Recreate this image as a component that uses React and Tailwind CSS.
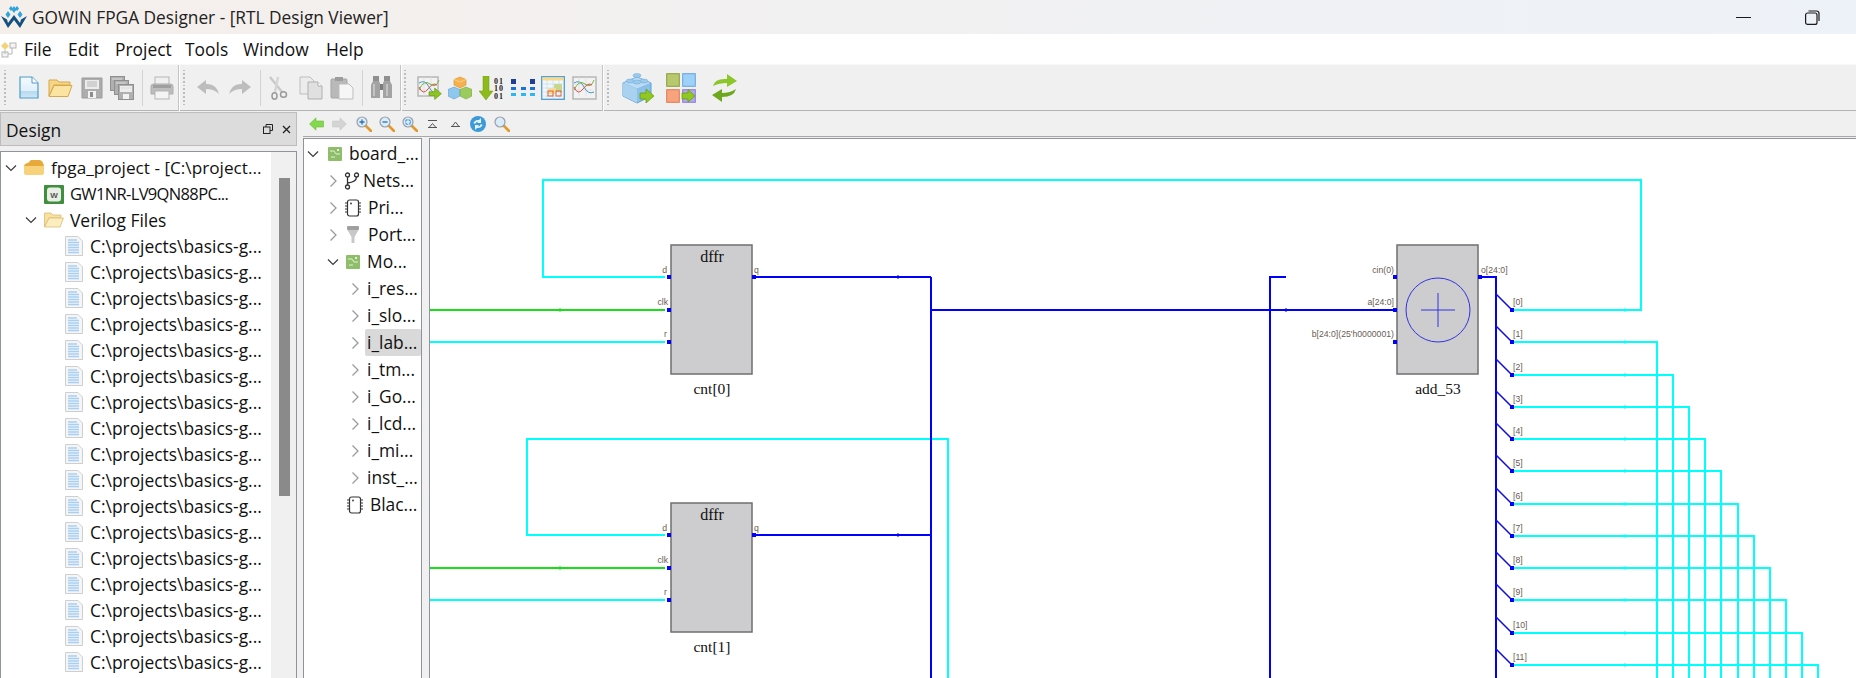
import React from 'react';

const Doc = () => (
  <svg width="20" height="23" viewBox="0 0 20 23">
    <defs><linearGradient id="dg" x1="0" y1="0" x2="0" y2="1"><stop offset="0" stopColor="#f4fafe" /><stop offset="0.65" stopColor="#e0f0fa" /><stop offset="0.66" stopColor="#b5d9ee" /><stop offset="1" stopColor="#cfe7f5" /></linearGradient></defs>
    <path d="M1 1H13L19 7V22H1Z" fill="url(#dg)" stroke="#4f9cc9" strokeWidth="1.2" />
    <path d="M13 1V7H19" fill="#fff" stroke="#4f9cc9" />
  </svg>
);
const Folder = () => (
  <svg width="25" height="20" viewBox="0 0 25 20">
    <path d="M1 18V2H9L11 4H22V7H6L1 18Z" fill="#f6d685" stroke="#d5a84c" />
    <path d="M1 18.5L6 7.5H24L20 18.5Z" fill="#fbe4a2" stroke="#d5a84c" />
  </svg>
);
const Floppy = ({ w = 22 }) => (
  <svg width={w} height={w} viewBox="0 0 22 22">
    <path d="M1 1H21V21H1Z" fill="#adadad" stroke="#9a9a9a" />
    <rect x="4" y="3" width="14" height="9" fill="#ececec" />
    <path d="M6 5H16M6 7H16M6 9H16" stroke="#b5b5b5" />
    <rect x="7" y="14" width="8" height="7" fill="#f2f2f2" />
    <rect x="9" y="15" width="3" height="5" fill="#8c8c8c" />
  </svg>
);
const SaveAll = () => (
  <svg width="24" height="24" viewBox="0 0 24 24">
    <g fill="#b0b0b0" stroke="#8f8f8f"><rect x="0.5" y="0.5" width="14" height="14" /><rect x="4.5" y="4.5" width="14" height="14" /><rect x="8.5" y="8.5" width="15" height="15" /></g>
    <rect x="10" y="10" width="12" height="6" fill="#ececec" />
    <rect x="13" y="18" width="6" height="5" fill="#f2f2f2" />
    <path d="M2 3H12M6 7H16M11 12H21" stroke="#dcdcdc" />
  </svg>
);
const Printer = () => (
  <svg width="24" height="24" viewBox="0 0 24 24">
    <rect x="5" y="1" width="14" height="8" fill="#f0f0f0" stroke="#b5b5b5" />
    <path d="M1 10Q1 8 4 8H20Q23 8 23 10V18H1Z" fill="#bdbdbd" stroke="#adadad" />
    <rect x="3" y="9" width="18" height="3" fill="#9f9f9f" />
    <rect x="5" y="15" width="14" height="8" fill="#f4f4f4" stroke="#b5b5b5" />
  </svg>
);
const Undo = ({ flip }) => (
  <svg width="24" height="15" viewBox="0 0 24 15" style={flip ? { transform: 'scaleX(-1)' } : undefined}>
    <path d="M1 7L10 0V4Q20 3 23 14Q18 9 10 9V14Z" fill="#bdbdbd" />
  </svg>
);
const Scissors = () => (
  <svg width="19" height="24" viewBox="0 0 19 24" fill="none">
    <path d="M1 1L13 16" stroke="#c9c9c9" strokeWidth="2.4" />
    <path d="M9 1L6 16" stroke="#d4d4d4" strokeWidth="2.4" />
    <ellipse cx="5.5" cy="20" rx="2.5" ry="3.2" stroke="#9a9a9a" strokeWidth="1.5" />
    <ellipse cx="14.5" cy="18.5" rx="3" ry="2.8" stroke="#9a9a9a" strokeWidth="1.5" />
  </svg>
);
const Copy = () => (
  <svg width="24" height="24" viewBox="0 0 24 24">
    <path d="M1 1H11L15 5V18H1Z" fill="#ececec" stroke="#bdbdbd" />
    <path d="M9 6H19L23 10V23H9Z" fill="#e0e0e0" stroke="#b0b0b0" />
    <path d="M19 6V10H23" fill="#fff" stroke="#b0b0b0" />
  </svg>
);
const Paste = () => (
  <svg width="24" height="24" viewBox="0 0 24 24">
    <rect x="1" y="3" width="16" height="19" rx="1" fill="#b9b9b9" stroke="#a5a5a5" />
    <rect x="5" y="1" width="8" height="4" fill="#9d9d9d" />
    <path d="M9 8H19L23 12V23H9Z" fill="#f6f6f6" stroke="#bdbdbd" />
  </svg>
);
const Binoculars = () => (
  <svg width="21" height="23" viewBox="0 0 21 23">
    <rect x="2" y="0" width="6" height="5" fill="#8f8f8f" /><rect x="13" y="0" width="6" height="5" fill="#8f8f8f" />
    <path d="M1 7L2 5H8L9 7V22H0V9Z" fill="#a3a3a3" /><path d="M12 7L13 5H19L21 9V22H12Z" fill="#a3a3a3" />
    <rect x="9" y="8" width="3" height="6" fill="#7c7c7c" />
    <path d="M3 8V20M16 8V20" stroke="#cfcfcf" strokeWidth="1.5" />
  </svg>
);
const GreenArrow = ({ x, y, s = 1 }) => (
  <path transform={`translate(${x} ${y}) scale(${s})`} d="M0 4H6V0L13 6L6 12V8H0Z" fill="#8fc31f" stroke="#5f9a10" strokeWidth="0.7" />
);
const Chart = ({ arrow }) => (
  <svg width="25" height="24" viewBox="0 0 25 24" fill="none">
    <rect x="1" y="1" width={arrow ? 20 : 23} height={arrow ? 19 : 22} fill="#f2f2f2" stroke="#b7b7b7" strokeWidth="1.5" />
    <path d="M1 8H21M1 14H21M7 1V20M14 1V20" stroke="#dddddd" strokeWidth="0.7" />
    <path d="M2 7Q8 3 12 11T22 16" stroke="#3f9bd0" />
    <path d="M2 14Q7 3 13 8T22 4" stroke="#7cb342" />
    <path d="M2 11Q6 20 11 13T20 9" stroke="#d9534f" />
    {arrow && <GreenArrow x="12" y="12" s="0.95" />}
  </svg>
);
const Cubes = () => (
  <svg width="24" height="24" viewBox="0 0 24 24">
    <path d="M12 1L18 3.5V9L12 12L6 9V3.5Z" fill="#f6b04c" stroke="#d98e25" strokeWidth="0.6" />
    <path d="M6 3.5L12 6L18 3.5" fill="none" stroke="#ffd08a" />
    <path d="M6 11L12 13.5V20L6 23L0 20V13.5Z" fill="#8fc7ee" stroke="#5a9fd3" strokeWidth="0.6" />
    <path d="M18 11L24 13.5V20L18 23L12 20V13.5Z" fill="#9ccb5d" stroke="#77a93a" strokeWidth="0.6" />
  </svg>
);
const Binary = () => (
  <svg width="24" height="24" viewBox="0 0 24 24">
    <path d="M4 0H10V15H14L7 24L0 15H4Z" fill="#8dbb17" stroke="#6f9a10" strokeWidth="0.5" />
    <text x="15" y="7.5" fontSize="8" fontWeight="700" fontFamily="Liberation Serif" fill="#222" textLength="9">01</text>
    <text x="15" y="15" fontSize="8" fontWeight="700" fontFamily="Liberation Serif" fill="#222" textLength="9">10</text>
    <text x="15" y="23" fontSize="8" fontWeight="700" fontFamily="Liberation Serif" fill="#222" textLength="9">01</text>
  </svg>
);
const Dots = () => (
  <svg width="25" height="17" viewBox="0 0 25 17">
    <rect x="1" y="0" width="5" height="5" fill="#1f3f94" /><rect x="20" y="0" width="5" height="5" fill="#1f3f94" />
    <rect x="1" y="8" width="5" height="3" fill="#1a72d8" /><rect x="11" y="8" width="5" height="3" fill="#1a72d8" /><rect x="20" y="8" width="5" height="3" fill="#1a72d8" />
    <rect x="1" y="14" width="5" height="3" fill="#2bb7f5" /><rect x="11" y="14" width="5" height="3" fill="#2bb7f5" /><rect x="20" y="14" width="5" height="3" fill="#2bb7f5" />
  </svg>
);
const Table = () => (
  <svg width="24" height="24" viewBox="0 0 24 24" fill="none">
    <rect x="0.7" y="0.7" width="22.6" height="22.6" fill="#f2f8fc" stroke="#5aa0cf" strokeWidth="1.4" />
    <rect x="1.5" y="1.5" width="21" height="3" fill="#f7d987" />
    <path d="M1 8H23M1 12H23M1 16H23M1 20H23M6 4V23M12 4V23M18 4V23" stroke="#c5dced" strokeWidth="0.7" />
    <rect x="13" y="8" width="8" height="8" fill="#c5d88d" /><rect x="7" y="12" width="8" height="6" fill="#f5dc9b" />
    <rect x="7" y="15" width="5" height="5" stroke="#e0603a" /><rect x="15" y="15" width="5" height="5" stroke="#e0603a" />
  </svg>
);
const BigCube = () => (
  <svg width="32" height="34" viewBox="0 0 32 34">
    <path d="M1 12L15 6L29 12V25L15 32L1 25Z" fill="#8cc1ea" stroke="#5a9fd3" />
    <path d="M1 12L15 18L29 12L15 6Z" fill="#bcdcf5" stroke="#7eb4df" strokeWidth="0.6" />
    <path d="M15 18V32L1 25V12Z" fill="#a9d2f1" />
    <ellipse cx="15" cy="4.5" rx="4" ry="2" fill="#9ccaec" stroke="#6ea9d8" strokeWidth="0.5" />
    <ellipse cx="8" cy="10" rx="4" ry="2" fill="#9ccaec" stroke="#6ea9d8" strokeWidth="0.5" />
    <ellipse cx="22" cy="10" rx="4" ry="2" fill="#9ccaec" stroke="#6ea9d8" strokeWidth="0.5" />
    <ellipse cx="15" cy="11" rx="4" ry="2" fill="#9ccaec" stroke="#6ea9d8" strokeWidth="0.5" />
    <path d="M18 22H24V18L32 25L24 32V28H18Z" fill="#90c820" stroke="#5f9a10" strokeWidth="0.7" />
  </svg>
);
const Grid4 = () => (
  <svg width="30" height="30" viewBox="0 0 30 30">
    <rect x="0.7" y="0.7" width="12.6" height="12.6" fill="#b8c86c" stroke="#8b9c3a" />
    <rect x="16.7" y="0.7" width="12.6" height="12.6" fill="#9fd0f8" stroke="#63a5de" />
    <rect x="0.7" y="16.7" width="12.6" height="12.6" fill="#f7a47e" stroke="#df7a4d" />
    <rect x="16.7" y="16.7" width="12.6" height="12.6" fill="#b4a8ee" stroke="#8a7bd8" />
    <path d="M16 20H22V16.5L29 23L22 29V26H16Z" fill="#90c820" stroke="#5f9a10" strokeWidth="0.7" />
  </svg>
);
const Refresh = () => (
  <svg width="25" height="30" viewBox="0 0 25 30">
    <path d="M1 13Q3 5 15 6V1L25 8L15 14V10Q7 10 1 13Z" fill="#8cc62b" />
    <path d="M24 16Q22 24 10 24V29L0 22L10 16V20Q18 20 24 16Z" fill="#6ea81f" />
  </svg>
);
const Handle = () => (
  <div className="flex flex-col gap-[2px] w-[2px] h-[36px] shrink-0">
    {[0, 1, 2, 3, 4, 5, 6, 7, 8, 9].map((i) => <div key={i} className="w-[2px] h-[2px] bg-[#bdbdbd]" />)}
  </div>
);
const Sep = ({ cls }) => <div className={`w-px h-[36px] bg-[#d2d2d2] shrink-0 ${cls}`} />;
const Divider = ({ cls }) => <div className={`w-[2px] h-[46px] bg-[#c4c4c4] border-r border-white shrink-0 ${cls}`} />;

const Mag = ({ kind }) => (
  <svg width="16" height="16" viewBox="0 0 16 16" fill="none">
    <path d="M9.5 9.5L15 15" stroke="#e0992a" strokeWidth="2.6" strokeLinecap="round" />
    <circle cx="6" cy="6" r="5" fill="#d8ecfa" stroke="#9a9fa8" strokeWidth="1.2" />
    {kind === '+' && <path d="M3.5 6H8.5M6 3.5V8.5" stroke="#2f6fb0" strokeWidth="1.3" />}
    {kind === '-' && <path d="M3.5 6H8.5" stroke="#2f6fb0" strokeWidth="1.3" />}
    {kind === 'f' && <circle cx="6" cy="6" r="2.5" stroke="#4b9ad4" strokeWidth="1.2" strokeDasharray="3 1" />}
  </svg>
);
const SmallArrow = ({ color, stroke, flip }) => (
  <svg width="15" height="14" viewBox="0 0 15 14" style={flip ? { transform: 'scaleX(-1)' } : undefined}>
    <path d="M0.5 7L7 0.8V4H14.5V10H7V13.2Z" fill={color} stroke={stroke} strokeWidth="0.5" />
  </svg>
);

const Chevron = ({ open }) => (
  <svg width="14" height="14" viewBox="0 0 14 14" fill="none" className="shrink-0">
    {open ? <path d="M2 4.5L7 9.5L12 4.5" stroke="#3c3c3c" strokeWidth="1.2" /> : <path d="M4.5 1.5L10 7L4.5 12.5" stroke="#9b9b9b" strokeWidth="1.3" />}
  </svg>
);
const ProjIcon = () => (
  <svg width="20" height="16" viewBox="0 0 20 16">
    <path d="M0 6Q1 3 4 3L7 0H16Q19 1 20 6Z" fill="#e6a93a" />
    <path d="M0 6H20V13Q20 15 18 15H2Q0 15 0 13Z" fill="#f7d27a" />
  </svg>
);
const ChipIcon = () => (
  <svg width="20" height="19" viewBox="0 0 20 19">
    <rect width="20" height="19" rx="1" fill="#3f8f3f" />
    <rect x="3" y="2.5" width="14" height="14" rx="3" fill="#e9efe6" />
    <text x="10" y="12.5" fontSize="8" fontWeight="700" textAnchor="middle" fontFamily="Liberation Sans" fill="#555">W</text>
  </svg>
);
const OpenFolder = () => (
  <svg width="20" height="16" viewBox="0 0 20 16">
    <path d="M0.5 15V1H7L9 3H17V6H5L0.5 15Z" fill="#f8e1a0" stroke="#d9bd73" strokeWidth="0.8" />
    <path d="M0.5 15L5 6H19.5L16 15Z" fill="#fcedc0" stroke="#d9bd73" strokeWidth="0.8" />
  </svg>
);
const FileIcon = () => (
  <svg width="18" height="20" viewBox="0 0 18 20" className="shrink-0">
    <path d="M0.5 0.5H13L17.5 5V19.5H0.5Z" fill="#f5f5f5" stroke="#cfcfcf" />
    <path d="M3 4H12M3 6.5H14M3 9H14M3 11.5H14M3 14H14M3 16.5H14" stroke="#a6cff6" strokeWidth="1.5" />
  </svg>
);
const BoardIcon = () => (
  <svg width="14" height="14" viewBox="0 0 14 14">
    <rect width="14" height="14" rx="1" fill="#8fbe6a" />
    <path d="M2 4H6L8 7H12M3 10H7" stroke="#e3f0d5" strokeWidth="1" fill="none" />
    <rect x="9" y="2" width="2" height="2" fill="#e3f0d5" />
  </svg>
);
const NetsIcon = () => (
  <svg width="16" height="18" viewBox="0 0 16 18" fill="none" stroke="#333" strokeWidth="1.3">
    <circle cx="3.5" cy="3" r="2" /><circle cx="12.5" cy="3" r="2" /><circle cx="3.5" cy="15" r="2" />
    <path d="M3.5 5V13M12.5 5Q12.5 10 3.5 11" />
  </svg>
);
const PrimIcon = () => (
  <svg width="16" height="18" viewBox="0 0 16 18" fill="none">
    <rect x="2.5" y="1" width="11" height="16" rx="2" stroke="#333" strokeWidth="1.2" />
    <path d="M0 4H2M0 7H2M0 10H2M0 13H2M14 4H16M14 7H16M14 10H16M14 13H16" stroke="#333" />
    <circle cx="6" cy="4.5" r="0.9" fill="#333" />
  </svg>
);
const PortIcon = () => (
  <svg width="14" height="18" viewBox="0 0 14 18">
    <rect x="1" y="0" width="12" height="4" rx="1" fill="#9f9f9f" />
    <path d="M1.5 4H12.5L8.5 11H5.5Z" fill="#c8c8c8" />
    <rect x="5.5" y="11" width="3" height="6" fill="#c9c9c9" />
  </svg>
);

const FileRow = () => (
  <div className="h-[26px] flex items-center pl-[64px] shrink-0">
    <FileIcon />
    <span className="ml-[7px] whitespace-nowrap">C:\projects\basics-g...</span>
  </div>
);

const RTree = ({ pl, gap = 'ml-[4px]', chev, open, icon, label }) => (
  <div className={`h-[27px] flex items-center shrink-0 whitespace-nowrap ${pl}`}>
    {chev && <Chevron open={open} />}
    {icon}
    <span className={gap}>{label}</span>
  </div>
);

const Block = ({ x, y, title, name }) => (
  <g>
    <rect x={x} y={y} width="81" height="129" fill="#cdcdcf" stroke="#6f6f6f" strokeWidth="1.5" />
    <text x={x + 41} y={y + 17} textAnchor="middle" fontSize="16" fontFamily="Liberation Serif" fill="#111">{title}</text>
    <text x={x + 41} y={y + 149} textAnchor="middle" fontSize="15.5" fontFamily="Liberation Serif" fill="#111">{name}</text>
  </g>
);
const Pin = ({ x, y }) => <rect x={x - 2} y={y - 2} width="4" height="4" fill="#0000ff" />;
const Lbl = ({ x, y, a = 'start', c = '#6a5c54', children }) => (
  <text x={x} y={y} textAnchor={a} fontSize="8.7" fontFamily="Liberation Sans" fill={c}>{children}</text>
);

const tapY = (i) => Math.round(310 + 32.27 * i);
const vX = (i) => Math.round(1657 + 16.1 * (i - 1));

function Schematic() {
  return (
    <svg width="1426" height="539" viewBox="430 139 1426 539" className="block">
      <g fill="none" stroke="#00ffff" strokeWidth="2">
        <path d="M429 342H665M429 600H665" />
        <path d="M665 277H543V180H1641V310H1512" />
        <path d="M665 535H527V439H948V678" />
        {Array.from({ length: 11 }, (_, k) => k + 1).map((i) => (
          <path key={i} d={`M1512 ${tapY(i)}H${vX(i)}V678`} />
        ))}
        {Array.from({ length: 12 }, (_, k) => k).map((i) => (
          <path key={i} strokeWidth="1" d={`M1625 ${tapY(i) - 2}V${tapY(i) + 2}`} />
        ))}
      </g>
      <g fill="none" stroke="#18e018" strokeWidth="2">
        <path d="M429 310H665M429 568H665" />
        <path strokeWidth="1" d="M560 308V312M560 566V570" />
      </g>
      <g fill="none" stroke="#0000ff" strokeWidth="2">
        <path d="M752 277H931M752 535H931M931 277V678M931 310H1395" />
        <path d="M1286 277H1270V678" />
        <path d="M1480 277H1496V678" />
        <path strokeWidth="1" d="M898 275V279M898 533V537M1286 308V312" />
      </g>
      <g fill="none" stroke="#1010d8" strokeWidth="1.6">
        {Array.from({ length: 12 }, (_, k) => k).map((i) => (
          <path key={i} d={`M1496 ${tapY(i) - 16}L1512 ${tapY(i)}`} />
        ))}
      </g>
      <Block x={671} y={245} title="dffr" name="cnt[0]" />
      <Block x={671} y={503} title="dffr" name="cnt[1]" />
      <Block x={1397} y={245} title="" name="add_53" />
      <circle cx="1438" cy="310" r="32" fill="none" stroke="#3232e0" />
      <path d="M1421 310H1455M1438 293V327" stroke="#3232e0" fill="none" />
      {[[669, 277], [669, 310], [669, 342], [754, 277], [669, 535], [669, 568], [669, 600], [754, 535], [1395, 277], [1395, 310], [1395, 342], [1480, 277]].map(([x, y]) => (
        <Pin key={`${x}-${y}`} x={x} y={y} />
      ))}
      {Array.from({ length: 12 }, (_, k) => k).map((i) => <Pin key={i} x={1512} y={tapY(i)} />)}
      <Lbl x={667} y={273} a="end">d</Lbl>
      <Lbl x={668} y={305} a="end">clk</Lbl>
      <Lbl x={667} y={337} a="end">r</Lbl>
      <Lbl x={754} y={273}>q</Lbl>
      <Lbl x={667} y={531} a="end">d</Lbl>
      <Lbl x={668} y={563} a="end">clk</Lbl>
      <Lbl x={667} y={595} a="end">r</Lbl>
      <Lbl x={754} y={531}>q</Lbl>
      <Lbl x={1394} y={273} a="end">cin(0)</Lbl>
      <Lbl x={1394} y={305} a="end">a[24:0]</Lbl>
      <Lbl x={1394} y={337} a="end">b[24:0](25'h0000001)</Lbl>
      <Lbl x={1481} y={273}>o[24:0]</Lbl>
      {Array.from({ length: 12 }, (_, k) => k).map((i) => <Lbl key={i} x={1513} y={tapY(i) - 5}>{`[${i}]`}</Lbl>)}
    </svg>
  );
}

export default function App() {
  return (
    <div className="w-[1856px] h-[678px] overflow-hidden flex flex-col bg-[#f0f0f0] text-[#111] text-[17.4px]" style={{ fontFamily: '"Open Sans", sans-serif' }}>
      {/* Title bar */}
      <div className="h-[34px] shrink-0 flex items-center bg-gradient-to-r from-[#f5efeb] to-[#edf2f8]">
        <svg width="26" height="24" viewBox="0 0 26 24" className="ml-[1px]">
          <path d="M0 11L7 23L13 15L19 23L26 11L20 14.5L19 18L13 10L7 18L6 14.5Z" fill="#14507e" />
          <g fill="#2ea3dc"><path d="M7 6l2.5 3.5L7 13l-2.5-3.5z" /><path d="M13 1l2.5 3.5L13 8l-2.5-3.5z" /><path d="M19 6l2.5 3.5L19 13l-2.5-3.5z" /><path d="M10 1l2 2.5L10 6 8 3.5z" /><path d="M16 1l2 2.5L16 6l-2-2.5z" /></g>
        </svg>
        <span className="ml-[5px] text-[17.3px] whitespace-nowrap text-[#222] pt-[1px]">GOWIN FPGA Designer - [RTL Design Viewer]</span>
        <div className="ml-auto flex items-center">
          <div className="w-[15px] h-px bg-[#1a1a1a]" />
          <svg width="15" height="15" viewBox="0 0 15 15" fill="none" className="ml-[54px] mr-[36px]" stroke="#1a1a1a" strokeWidth="1.2">
            <rect x="0.6" y="3" width="11.4" height="11.4" rx="2" />
            <path d="M3.5 1H11.5Q14 1 14 3.5V11" />
          </svg>
        </div>
      </div>
      {/* Menu */}
      <div className="h-[30px] shrink-0 bg-white flex items-center text-[17.4px] pt-[1px]">
        <svg width="16" height="16" viewBox="0 0 16 16" className="ml-[1px]">
          <path d="M4 0L8 4L4 8L0 4Z" fill="#f5d27a" />
          <rect x="9" y="1" width="6" height="5" fill="#f4f4f4" stroke="#b5b5b5" />
          <rect x="1" y="10" width="6" height="5" fill="#f4f4f4" stroke="#b5b5b5" />
          <path d="M4 8V12M7 12H11V6" stroke="#b5b5b5" fill="none" />
        </svg>
        <span className="ml-[7px] w-[44px]">File</span>
        <span className="w-[47px]">Edit</span>
        <span className="w-[70px]">Project</span>
        <span className="w-[58px]">Tools</span>
        <span className="w-[83px]">Window</span>
        <span>Help</span>
      </div>
      {/* Main toolbar */}
      <div className="h-[47px] shrink-0 bg-[#f0f0f0] border-b border-[#b4b4b4] border-t border-t-[#f8f8f8] flex items-center">
        <div className="ml-[4px]"><Handle /></div>
        <div className="ml-[13px]"><Doc /></div>
        <div className="ml-[9px]"><Folder /></div>
        <div className="ml-[8px]"><Floppy /></div>
        <div className="ml-[7px]"><SaveAll /></div>
        <Sep cls="ml-[8px]" />
        <div className="ml-[7px]"><Printer /></div>
        <Divider cls="ml-[4px]" />
        <div className="ml-[3px]"><Handle /></div>
        <div className="ml-[11px]"><Undo /></div>
        <div className="ml-[8px]"><Undo flip /></div>
        <Sep cls="ml-[8px]" />
        <div className="ml-[8px]"><Scissors /></div>
        <div className="ml-[11px]"><Copy /></div>
        <div className="ml-[7px]"><Paste /></div>
        <Sep cls="ml-[8px]" />
        <div className="ml-[8px]"><Binoculars /></div>
        <Divider cls="ml-[8px]" />
        <div className="ml-[2px]"><Handle /></div>
        <div className="ml-[11px]"><Chart arrow /></div>
        <div className="ml-[6px]"><Cubes /></div>
        <div className="ml-[7px]"><Binary /></div>
        <div className="ml-[7px]"><Dots /></div>
        <div className="ml-[6px]"><Table /></div>
        <div className="ml-[7px]"><Chart /></div>
        <Divider cls="ml-[5px]" />
        <div className="ml-[3px]"><Handle /></div>
        <div className="ml-[13px]"><BigCube /></div>
        <div className="ml-[12px]"><Grid4 /></div>
        <div className="ml-[16px]"><Refresh /></div>
      </div>
      {/* Body */}
      <div className="flex-1 min-h-0 flex">
        {/* Design dock */}
        <div className="w-[297px] shrink-0 flex flex-col pt-[1px]">
          <div className="h-[34px] shrink-0 bg-[#dcdcdc] border border-[#bdbdbd] flex items-center pl-[5px] text-[17.4px]">
            <span className="pt-[2px]">Design</span>
            <svg width="10" height="10" viewBox="0 0 10 10" fill="none" stroke="#222" className="ml-auto">
              <rect x="0.5" y="3" width="6.5" height="6.5" /><path d="M3 3V0.5H9.5V6.5H7" />
            </svg>
            <svg width="9" height="9" viewBox="0 0 9 9" stroke="#222" strokeWidth="1.3" className="ml-[9px] mr-[5px]"><path d="M1 1L8 8M8 1L1 8" /></svg>
          </div>
          <div className="flex-1 min-h-0 mt-[5px] bg-white border border-[#8f949b] border-b-0 flex overflow-hidden">
            <div className="flex-1 min-w-0 overflow-hidden pt-[3px] flex flex-col">
              <div className="h-[26px] flex items-center shrink-0 pl-[3px]">
                <Chevron open /><span className="ml-[6px]"><ProjIcon /></span>
                <span className="ml-[7px] whitespace-nowrap text-[17.2px]">fpga_project - [C:\project...</span>
              </div>
              <div className="h-[26px] flex items-center shrink-0 pl-[43px]">
                <ChipIcon /><span className="ml-[6px] whitespace-nowrap text-[16.5px] tracking-[-0.65px]">GW1NR-LV9QN88PC...</span>
              </div>
              <div className="h-[26px] flex items-center shrink-0 pl-[23px]">
                <Chevron open /><span className="ml-[6px]"><OpenFolder /></span>
                <span className="ml-[6px] whitespace-nowrap">Verilog Files</span>
              </div>
              {Array.from({ length: 17 }, (_, i) => <FileRow key={i} />)}
            </div>
            <div className="w-[25px] shrink-0 bg-[#f0f0f0] pt-[26px] pl-[1px] flex justify-center">
              <div className="w-[11px] h-[318px] bg-[#8a8a8a]" />
            </div>
          </div>
        </div>
        {/* RTL viewer */}
        <div className="flex-1 min-w-0 flex flex-col pl-[6px] pt-[1px]">
          <div className="h-[25px] shrink-0 flex items-center border-b border-[#a8a8a8] pl-[6px]">
            <SmallArrow color="#84d84e" stroke="#5cb52a" />
            <div className="ml-[8px]"><SmallArrow color="#d4d4d4" stroke="#c4c4c4" flip /></div>
            <div className="ml-[9px]"><Mag kind="+" /></div>
            <div className="ml-[7px]"><Mag kind="-" /></div>
            <div className="ml-[7px]"><Mag kind="f" /></div>
            <svg width="9" height="8" viewBox="0 0 9 8" className="ml-[10px]" fill="none" stroke="#555"><path d="M0 0.5H9M0 7.5H9M1.5 7L4.5 3.5L7.5 7" /></svg>
            <svg width="9" height="6" viewBox="0 0 9 6" className="ml-[14px]" fill="none" stroke="#555"><path d="M0 5.5H9M1.5 5L4.5 1L7.5 5" /></svg>
            <svg width="16" height="16" viewBox="0 0 16 16" className="ml-[10px]">
              <circle cx="8" cy="8" r="8" fill="#3c9ad8" />
              <path d="M3.5 7Q5 3.5 9 4L11 2V7H7L8.5 5.5Q6 5.5 5 8ZM12.5 9Q11 12.5 7 12L5 14V9H9L7.5 10.5Q10 10.5 11 8Z" fill="#e8f4fb" />
            </svg>
            <div className="ml-[8px]"><Mag /></div>
          </div>
          <div className="flex-1 min-h-0 flex pt-[1px]">
            <div className="w-[119px] shrink-0 bg-white border border-[#8f949b] border-b-0 overflow-hidden text-[17.4px] flex flex-col py-px">
              <RTree pl="pl-[2px]" chev open gap="ml-[7px]" icon={<span className="ml-[8px]"><BoardIcon /></span>} label="board_..." />
              <RTree pl="pl-[22px]" chev gap="ml-[3px]" icon={<span className="ml-[4px]"><NetsIcon /></span>} label="Nets..." />
              <RTree pl="pl-[22px]" chev gap="ml-[7px]" icon={<span className="ml-[5px]"><PrimIcon /></span>} label="Pri..." />
              <RTree pl="pl-[22px]" chev gap="ml-[8px]" icon={<span className="ml-[6px]"><PortIcon /></span>} label="Port..." />
              <RTree pl="pl-[22px]" chev open gap="ml-[7px]" icon={<span className="ml-[6px]"><BoardIcon /></span>} label="Mo..." />
              {['i_res...', 'i_slo...', 'i_lab...', 'i_tm...', 'i_Go...', 'i_lcd...', 'i_mi...', 'inst_...'].map((t) => (
                <div key={t} className="h-[27px] flex items-center shrink-0 pl-[44px] whitespace-nowrap">
                  <Chevron />
                  <span className={`ml-[3px] h-[27px] flex-1 flex items-center pl-[2px] rounded-[2px] ${t === 'i_lab...' ? 'bg-[#d9d9d9]' : ''}`}>{t}</span>
                </div>
              ))}
              <RTree pl="pl-[37px]" gap="ml-[7px]" icon={<span className="ml-[6px]"><PrimIcon /></span>} label="Blac..." />
            </div>
            <div className="flex-1 min-w-0 ml-[7px] bg-white border-l border-t border-[#8f949b] overflow-hidden">
              <Schematic />
            </div>
          </div>
        </div>
      </div>
    </div>
  );
}
